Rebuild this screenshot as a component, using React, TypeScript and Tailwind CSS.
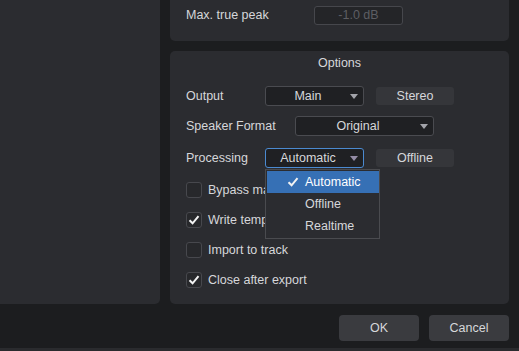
import React from "react";

const font = { fontFamily: '"Liberation Sans", Arial, sans-serif' };

function Arrow({ focused }: { focused?: boolean }) {
  return (
    <svg width="8" height="5" viewBox="0 0 8 5" className="shrink-0">
      <path d="M0 0 L8 0 L4 5 Z" fill={focused ? "#948ca6" : "#a3a4aa"} />
    </svg>
  );
}

function Select({
  value,
  width,
  focused,
  children,
}: {
  value: string;
  width: string;
  focused?: boolean;
  children?: React.ReactNode;
}) {
  return (
    <div
      className={`relative flex h-[20px] items-center rounded-[3px] border bg-[#1f2023] pr-[5px] ${width} ${
        focused ? "border-[#4b8ad0]" : "border-[#4a4b50]"
      }`}
    >
      <span className="flex-1 text-center">{value}</span>
      <Arrow focused={focused} />
      {children}
    </div>
  );
}

function Check() {
  return (
    <svg width="12" height="10" viewBox="0 0 12 10">
      <path d="M1.5 5.2 L4.6 8.3 L10.5 1.2" fill="none" stroke="#f2f2f2" strokeWidth="2" />
    </svg>
  );
}

function Checkbox({ label, checked }: { label: string; checked?: boolean }) {
  return (
    <div className="flex h-[16px] items-center">
      <div className="flex h-[16px] w-[16px] items-center justify-center rounded-[3px] border border-[#47484d] bg-[#27282b]">
        {checked && <Check />}
      </div>
      <span className="ml-[6px]">{label}</span>
    </div>
  );
}

export default function App() {
  return (
    <div
      className="flex h-[351px] w-[519px] flex-col overflow-hidden bg-[#1c1d1f] text-[12.5px] text-[#d6d7da]"
      style={font}
    >
      <div className="flex">
        {/* left panel */}
        <div className="h-[304px] w-[160px] rounded-br-[5px] bg-[#2b2c30]" />

        <div className="ml-[10px] flex w-[339px] flex-col">
          {/* loudness panel (cut off at top) */}
          <div className="flex h-[41px] items-start rounded-b-[5px] bg-[#2b2c30] pl-[16px] pt-[6px]">
            <span className="w-[128px] leading-[19px]">Max. true peak</span>
            <div className="flex h-[19px] w-[89px] items-center justify-center rounded-[3px] border border-[#46474c] bg-[#242528] text-[#5d5e63]">
              -1.0 dB
            </div>
          </div>

          {/* options panel */}
          <div className="mt-[10px] flex h-[253px] flex-col rounded-[5px] bg-[#2b2c30] pl-[16px]">
            <div className="flex h-[24px] items-center justify-center pr-[16px]">Options</div>

            <div className="mt-[11px] flex items-center">
              <span className="w-[79px]">Output</span>
              <Select value="Main" width="w-[99px]" />
              <div className="ml-[12px] flex h-[18px] w-[78px] items-center justify-center rounded-[3px] bg-[#35363a]">
                Stereo
              </div>
            </div>

            <div className="mt-[10px] flex items-center">
              <span className="w-[109px]">Speaker Format</span>
              <Select value="Original" width="w-[139px]" />
            </div>

            <div className="relative z-10 mt-[12px] flex items-center">
              <span className="w-[79px]">Processing</span>
              <Select value="Automatic" width="w-[99px]" focused>
                <div className="absolute left-[-1px] top-[20px] w-[115px] border border-[#4a4b4f] bg-[#2b2c30] py-px pl-px">
                  <div className="relative flex h-[22px] items-center bg-[#3670b5] pl-[38px] text-white">
                    <span className="absolute left-[20px] top-[6px]">
                      <Check />
                    </span>
                    Automatic
                  </div>
                  <div className="flex h-[22px] items-center pl-[38px]">Offline</div>
                  <div className="flex h-[22px] items-center pl-[38px]">Realtime</div>
                </div>
              </Select>
              <div className="ml-[12px] flex h-[18px] w-[78px] items-center justify-center rounded-[3px] bg-[#35363a]">
                Offline
              </div>
            </div>

            <div className="mt-[14px] flex flex-col gap-[14px]">
              <Checkbox label="Bypass master" />
              <Checkbox label="Write tempo" checked />
              <Checkbox label="Import to track" />
              <Checkbox label="Close after export" checked />
            </div>
          </div>
        </div>
      </div>

      {/* footer buttons */}
      <div className="mt-[11px] flex w-[509px] justify-end gap-[10px]">
        <div className="flex h-[26px] w-[80px] items-center justify-center rounded-[4px] bg-[#3a3b3f]">OK</div>
        <div className="flex h-[26px] w-[80px] items-center justify-center rounded-[4px] bg-[#3a3b3f]">Cancel</div>
      </div>
      <div className="mt-auto h-[3px] bg-[#2a2b2e]" />
    </div>
  );
}
